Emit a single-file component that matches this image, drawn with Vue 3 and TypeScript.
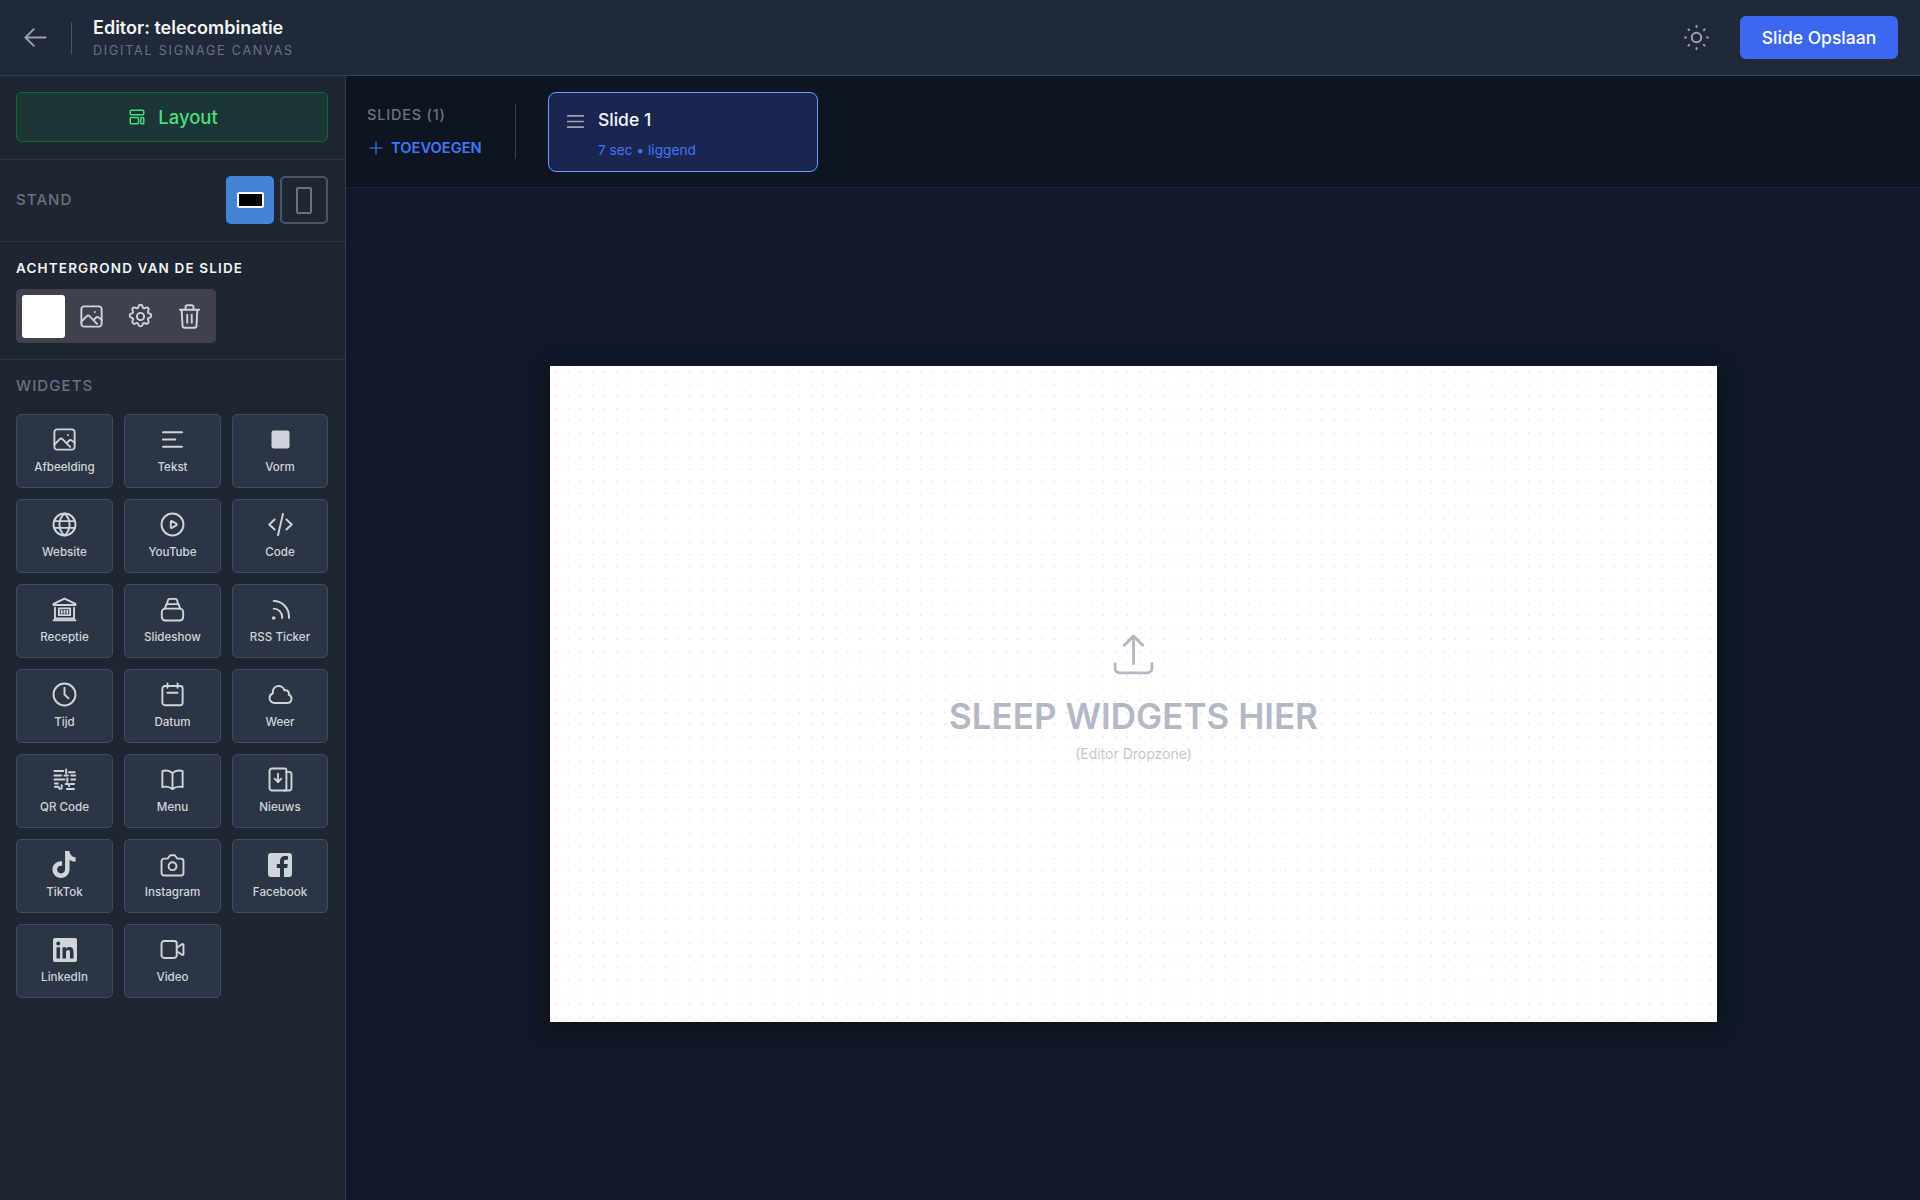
<script setup lang="ts">
interface Widget {
  label: string
  paths: string[]
  filled?: boolean
  brand?: boolean
}

const photo = [
  'M5.5 3h13A2.5 2.5 0 0 1 21 5.5v13a2.5 2.5 0 0 1-2.5 2.5h-13A2.5 2.5 0 0 1 3 18.5v-13A2.5 2.5 0 0 1 5.5 3Z',
  'M3 16.5l4.6-4.6a2 2 0 0 1 2.8 0l6.6 6.6',
  'M14.5 14.5l1.4-1.4a2 2 0 0 1 2.6-.1L21 15',
  'M15 8h.01',
]

const widgets: Widget[] = [
  { label: 'Afbeelding', paths: photo },
  { label: 'Tekst', paths: ['M3.5 5.5h17', 'M3.5 12h11', 'M3.5 18.5h17'] },
  { label: 'Vorm', paths: ['M6 4h12a2 2 0 0 1 2 2v12a2 2 0 0 1-2 2H6a2 2 0 0 1-2-2V6a2 2 0 0 1 2-2Z'], filled: true },
  {
    label: 'Website',
    paths: [
      'M21.75 12a9.75 9.75 0 1 1-19.5 0 9.75 9.75 0 0 1 19.5 0Z',
      'M12 2.25c-3 2.6-4.5 5.9-4.5 9.75s1.5 7.15 4.5 9.75c3-2.6 4.5-5.9 4.5-9.75S15 4.85 12 2.25Z',
      'M2.8 9h18.4',
      'M2.8 15h18.4',
    ],
  },
  {
    label: 'YouTube',
    paths: [
      'M21.75 12a9.75 9.75 0 1 1-19.5 0 9.75 9.75 0 0 1 19.5 0Z',
      'M15.6 11.5a.6.6 0 0 1 0 1l-4.2 2.6a.6.6 0 0 1-.9-.5V9.4a.6.6 0 0 1 .9-.5l4.2 2.6Z',
    ],
  },
  { label: 'Code', paths: ['M6.75 7.5 2 12l4.75 4.5', 'M17.25 7.5 22 12l-4.75 4.5', 'M14.25 2.5l-4.5 19'] },
  {
    label: 'Receptie',
    paths: [
      'M12 2.25 21.75 7v1H2.25V7L12 2.25Z',
      'M3.5 10.5v9.5h17v-9.5',
      'M2.25 21.5h19.5',
      'M7 11h10v6H7Z',
      'M9.5 13v2',
      'M12 13v2',
      'M14.5 13v2',
    ],
  },
  {
    label: 'Slideshow',
    paths: [
      'M5.5 11.25h13a3 3 0 0 1 3 3v4.5a3 3 0 0 1-3 3h-13a3 3 0 0 1-3-3v-4.5a3 3 0 0 1 3-3Z',
      'M5.25 11.25 6.6 7.25h10.8l1.35 4',
      'M7 7.25l1-3.6a1.5 1.5 0 0 1 1.4-1.1h5.2a1.5 1.5 0 0 1 1.4 1.1l1 3.6',
    ],
  },
  {
    label: 'RSS Ticker',
    paths: [
      'M6 4.5c7.45 0 13.5 6.05 13.5 13.5v1.5',
      'M6 11.25A7.5 7.5 0 0 1 13.5 18.75v.75',
      'M5.25 19.5a.75.75 0 1 0 1.5 0 .75.75 0 0 0-1.5 0Z',
    ],
  },
  {
    label: 'Tijd',
    paths: ['M21.75 12a9.75 9.75 0 1 1-19.5 0 9.75 9.75 0 0 1 19.5 0Z', 'M12 6v6l3.5 3.5'],
  },
  {
    label: 'Datum',
    paths: [
      'M5.25 4.5h13.5a2.25 2.25 0 0 1 2.25 2.25v12.5a2.25 2.25 0 0 1-2.25 2.25H5.25A2.25 2.25 0 0 1 3 19.25V6.75A2.25 2.25 0 0 1 5.25 4.5Z',
      'M7.5 2.25V6',
      'M16.5 2.25V6',
      'M7.5 10.5h9',
    ],
  },
  {
    label: 'Weer',
    paths: [
      'M2.25 15a4.5 4.5 0 0 0 4.5 4.5H18a3.75 3.75 0 0 0 1.33-7.26 3 3 0 0 0-3.83-3.84A5.25 5.25 0 0 0 5.3 10.9 4.5 4.5 0 0 0 2.25 15Z',
    ],
  },
  {
    label: 'QR Code',
    paths: [
      'M3 4.5h8',
      'M13.5 3v3.5',
      'M16 5.5h5',
      'M3 8.5h6',
      'M12 8.5h3',
      'M18 8.5h3.5',
      'M3 12h9',
      'M14.5 11v3',
      'M18 12h3.5',
      'M3.5 15.5h2.5',
      'M3.5 18.5h3l1.5 2',
      'M9.5 17v3',
      'M13 16h3v2',
      'M17.5 16h3',
      'M14 20.5h6.5',
    ],
  },
  {
    label: 'Menu',
    paths: [
      'M12 6.2A9 9 0 0 0 6 4a9 9 0 0 0-3 .5v14.3a9 9 0 0 1 3-.5c2.3 0 4.4.9 6 2.2',
      'M12 6.2A9 9 0 0 1 18 4a9 9 0 0 1 3 .5v14.3a9 9 0 0 0-3-.5c-2.3 0-4.4.9-6 2.2V6.2Z',
    ],
  },
  {
    label: 'Nieuws',
    paths: [
      'M4.5 2.25h11.25a1.5 1.5 0 0 1 1.5 1.5v16.5a1.5 1.5 0 0 1-1.5 1.5H4.5A2.25 2.25 0 0 1 2.25 19.5v-15A2.25 2.25 0 0 1 4.5 2.25Z',
      'M17.25 5.25h2.25a2.25 2.25 0 0 1 2.25 2.25v12a2.25 2.25 0 0 1-2.25 2.25h-4',
      'M9.75 6.75v7.5',
      'M6.75 11.25l3 3 3-3',
    ],
  },
  {
    label: 'TikTok',
    paths: [
      'M12.5 0h3.9c.2 3.1 2.4 5.4 5.4 5.6v3.9c-2 .1-3.8-.6-5.3-1.7v8.3c0 4.4-3.2 7.9-7.6 7.9-4.2 0-7.6-3.3-7.6-7.5 0-4.6 4-8 8.6-7.3v4.1c-2.2-.6-4.5.9-4.5 3.2 0 1.9 1.5 3.5 3.5 3.5s3.6-1.6 3.6-3.7V0Z',
    ],
    filled: true,
  },
  {
    label: 'Instagram',
    paths: [
      'M4.5 6.75h2.6a1.5 1.5 0 0 0 1.3-.7l.9-1.5a1.5 1.5 0 0 1 1.3-.8h2.8a1.5 1.5 0 0 1 1.3.8l.9 1.5a1.5 1.5 0 0 0 1.3.7h2.6a2.25 2.25 0 0 1 2.25 2.25v10.5a2.25 2.25 0 0 1-2.25 2.25H4.5a2.25 2.25 0 0 1-2.25-2.25V9a2.25 2.25 0 0 1 2.25-2.25Z',
      'M15.5 13.5a3.5 3.5 0 1 1-7 0 3.5 3.5 0 0 1 7 0Z',
    ],
  },
  {
    label: 'Facebook',
    paths: [
      'M3 0h18a3 3 0 0 1 3 3v18a3 3 0 0 1-3 3h-5v-9h3.2l.6-4H16V8.6c0-1.1.5-1.9 2-1.9h2V3.2c-.7-.1-1.7-.2-2.9-.2-3 0-5.1 1.8-5.1 5.1V11H8.8v4H12v9H3a3 3 0 0 1-3-3V3a3 3 0 0 1 3-3Z',
    ],
    filled: true,
    brand: true,
  },
  {
    label: 'LinkedIn',
    paths: [
      'M2 0h20a2 2 0 0 1 2 2v20a2 2 0 0 1-2 2H2a2 2 0 0 1-2-2V2a2 2 0 0 1 2-2Zm1.5 9.2V20.5H7V9.2H3.5ZM5.25 3.5a2 2 0 1 0 0 4 2 2 0 0 0 0-4ZM9.5 9.2V20.5H13v-5.6c0-1.5.3-2.9 2.1-2.9s1.9 1.7 1.9 3v5.5h3.5v-6.2c0-3-.7-5.4-4.2-5.4-1.7 0-2.8.9-3.3 1.8h-.05V9.2H9.5Z',
    ],
    filled: true,
    brand: true,
  },
  {
    label: 'Video',
    paths: [
      'M4.5 4.5h9a2.25 2.25 0 0 1 2.25 2.25v10.5a2.25 2.25 0 0 1-2.25 2.25h-9a2.25 2.25 0 0 1-2.25-2.25V6.75A2.25 2.25 0 0 1 4.5 4.5Z',
      'M15.75 10.5l4.7-3.1a.75.75 0 0 1 1.3.6v8a.75.75 0 0 1-1.3.6l-4.7-3.1',
    ],
  },
]
</script>

<template>
  <div class="editor">
    <header class="topbar">
      <div class="topbar-left">
        <button class="back" aria-label="Terug">
          <svg viewBox="0 0 24 24" class="back-icon">
            <path d="M10.5 19.5 3 12l7.5-7.5M3 12h18" />
          </svg>
        </button>
        <div class="topbar-sep"></div>
        <div>
          <h1 class="title">Editor: telecombinatie</h1>
          <p class="subtitle">DIGITAL SIGNAGE CANVAS</p>
        </div>
      </div>
      <div class="topbar-right">
        <svg viewBox="0 0 24 24" class="sun">
          <circle cx="12" cy="12" r="4.2" />
          <path d="M12 1.8v.9M12 21.3v.9M1.8 12h.9M21.3 12h.9M4.8 4.8l.6.6M18.6 18.6l.6.6M4.8 19.2l.6-.6M18.6 5.4l.6-.6" />
        </svg>
        <button class="save">Slide Opslaan</button>
      </div>
    </header>

    <div class="body">
      <aside class="sidebar">
        <div class="section layout-section">
          <button class="layout-btn">
            <svg viewBox="0 0 24 24" class="layout-icon">
              <rect x="3" y="3" width="18" height="6" rx="1.5" />
              <rect x="3" y="12.5" width="11" height="8.5" rx="1.5" />
              <rect x="17" y="12.5" width="4" height="8.5" rx="1.5" />
            </svg>
            Layout
          </button>
        </div>

        <div class="section stand-section">
          <span class="muted-label">STAND</span>
          <div class="stand-btns">
            <button class="stand active"><span class="landscape"></span></button>
            <button class="stand"><span class="portrait"></span></button>
          </div>
        </div>

        <div class="section bg-section">
          <h2 class="bg-title">ACHTERGROND VAN DE SLIDE</h2>
          <div class="bg-tools">
            <span class="swatch"></span>
            <svg viewBox="0 0 24 24" class="tool-icon">
              <path v-for="d in photo" :key="d" :d="d" />
            </svg>
            <svg viewBox="0 0 24 24" class="tool-icon">
              <path d="M10.3 2.8a1.8 1.8 0 0 1 3.4 0l.3.9a1.3 1.3 0 0 0 1.8.8l.9-.4a1.8 1.8 0 0 1 2.4 2.4l-.4.9a1.3 1.3 0 0 0 .8 1.8l.9.3a1.8 1.8 0 0 1 0 3.4l-.9.3a1.3 1.3 0 0 0-.8 1.8l.4.9a1.8 1.8 0 0 1-2.4 2.4l-.9-.4a1.3 1.3 0 0 0-1.8.8l-.3.9a1.8 1.8 0 0 1-3.4 0l-.3-.9a1.3 1.3 0 0 0-1.8-.8l-.9.4a1.8 1.8 0 0 1-2.4-2.4l.4-.9a1.3 1.3 0 0 0-.8-1.8l-.9-.3a1.8 1.8 0 0 1 0-3.4l.9-.3a1.3 1.3 0 0 0 .8-1.8l-.4-.9a1.8 1.8 0 0 1 2.4-2.4l.9.4a1.3 1.3 0 0 0 1.8-.8l.3-.9Z" />
              <circle cx="12" cy="12" r="3.2" />
            </svg>
            <svg viewBox="0 0 24 24" class="tool-icon">
              <path d="M3.5 6h17M8.5 6V3.5A1.5 1.5 0 0 1 10 2h4a1.5 1.5 0 0 1 1.5 1.5V6M5 6l.8 14a2 2 0 0 0 2 2h8.400a2 2 0 0 0 2-2L19 6M10 10.500v7M14 10.500v7" />
            </svg>
          </div>
        </div>

        <div class="widgets-section">
          <span class="muted-label">WIDGETS</span>
          <div class="widget-grid">
            <div v-for="w in widgets" :key="w.label" class="widget">
              <svg viewBox="0 0 24 24" class="widget-icon" :class="{ filled: w.filled, brand: w.brand }">
                <path v-for="d in w.paths" :key="d" :d="d" />
              </svg>
              <span class="widget-label">{{ w.label }}</span>
            </div>
          </div>
        </div>
      </aside>

      <main class="main">
        <div class="slides-bar">
          <div class="slides-head">
            <span class="slides-count">SLIDES (1)</span>
            <button class="add">
              <svg viewBox="0 0 24 24" class="add-icon"><path d="M12 4v16M4 12h16" /></svg>
              TOEVOEGEN
            </button>
          </div>
          <div class="slides-sep"></div>
          <div class="slide-card">
            <svg viewBox="0 0 24 24" class="drag-icon"><path d="M3 5.5h18M3 12h18M3 18.5h18" /></svg>
            <div>
              <div class="slide-name">Slide 1</div>
              <div class="slide-meta">7 sec • liggend</div>
            </div>
          </div>
        </div>

        <div class="stage">
          <div class="canvas">
            <svg viewBox="0 0 24 24" class="upload-icon">
              <path d="M3 16.5v2.25A2.25 2.25 0 0 0 5.25 21h13.5A2.25 2.25 0 0 0 21 18.75V16.500M7.500 7.500 12 3l4.500 4.500M12 3v13.500" />
            </svg>
            <div class="drop-title">SLEEP WIDGETS HIER</div>
            <div class="drop-sub">(Editor Dropzone)</div>
          </div>
        </div>
      </main>
    </div>
  </div>
</template>

<style>
html,
body {
  margin: 0;
  background: #111827;
}
</style>

<style scoped>
.editor {
  height: 100vh;
  display: flex;
  flex-direction: column;
  font-family: Inter, "Noto Sans", sans-serif;
  color: #e5e7eb;
  overflow: hidden;
}

button {
  font-family: inherit;
  cursor: pointer;
}

svg {
  fill: none;
  stroke: currentColor;
  stroke-linecap: round;
  stroke-linejoin: round;
  flex-shrink: 0;
}

.topbar {
  height: 75px;
  flex-shrink: 0;
  display: flex;
  align-items: center;
  justify-content: space-between;
  background: #202937;
  border-bottom: 1px solid #374151;
  padding: 0 22px;
}

.topbar-left,
.topbar-right {
  display: flex;
  align-items: center;
}

.back {
  background: none;
  border: 0;
  padding: 0;
  display: flex;
  color: #9ca3af;
}

.back-icon {
  width: 27px;
  height: 27px;
  stroke-width: 1.6;
}

.topbar-sep {
  width: 1px;
  height: 32px;
  background: #4b5563;
  margin: 0 21px 0 22px;
}

.title {
  margin: 0;
  font-size: 18px;
  line-height: 24px;
  font-weight: 600;
  color: #f3f4f6;
}

.subtitle {
  margin: 3px 0 0;
  font-size: 12.5px;
  line-height: 16px;
  letter-spacing: 1.8px;
  color: #6b7280;
}

.sun {
  width: 27px;
  height: 27px;
  color: #9ca3af;
  stroke-width: 1.8;
  margin-right: 30px;
}

.save {
  width: 158px;
  height: 43px;
  border: 0;
  border-radius: 6px;
  background: #3b68ee;
  color: #fff;
  font-size: 17.5px;
  font-weight: 500;
}

.body {
  flex: 1;
  display: flex;
  min-height: 0;
}

.sidebar {
  width: 346px;
  box-sizing: border-box;
  flex-shrink: 0;
  background: #1e2533;
  border-right: 1px solid #353d4b;
}

.section {
  border-bottom: 1px solid #2f3744;
  padding: 16px 17px 17px 16px;
}

.layout-btn {
  width: 100%;
  height: 50px;
  display: flex;
  align-items: center;
  justify-content: center;
  gap: 12px;
  padding: 0 0 0 2px;
  background: #1c3535;
  border: 1px solid #166534;
  border-radius: 5px;
  color: #4ade80;
  font-size: 18.5px;
  font-weight: 500;
}

.layout-icon {
  width: 18px;
  height: 18px;
  stroke-width: 2;
}

.stand-section {
  display: flex;
  align-items: center;
  justify-content: space-between;
}

.muted-label {
  display: block;
  font-size: 15px;
  line-height: 18px;
  font-weight: 500;
  letter-spacing: 1.1px;
  color: #6b7280;
}

.stand-btns {
  display: flex;
  gap: 6px;
}

.stand {
  width: 48px;
  height: 48px;
  box-sizing: border-box;
  display: flex;
  align-items: center;
  justify-content: center;
  padding: 0;
  background: transparent;
  border: 2px solid #4b5563;
  border-radius: 5px;
}

.stand.active {
  background: #4384d6;
  border: 0;
}

.landscape {
  width: 27px;
  height: 16px;
  box-sizing: border-box;
  background: #000;
  border: 2px solid #fff;
  border-radius: 2px;
}

.portrait {
  width: 16px;
  height: 27px;
  box-sizing: border-box;
  border: 2px solid #6b7280;
  border-radius: 2px;
}

.bg-section {
  padding: 17px 17px 16px 16px;
}

.bg-title {
  margin: 0 0 12px;
  font-size: 13.5px;
  line-height: 18px;
  font-weight: 600;
  letter-spacing: 1.15px;
  color: #f3f4f6;
}

.bg-tools {
  width: 200px;
  height: 54px;
  box-sizing: border-box;
  display: flex;
  align-items: center;
  gap: 22px;
  padding: 0 6px;
  background: #3e424d;
  border-radius: 5px;
  color: #d1d5db;
}

.swatch {
  width: 43px;
  height: 43px;
  background: #fff;
  border-radius: 3px;
  margin-right: -9px;
}

.tool-icon {
  width: 27px;
  height: 27px;
  stroke-width: 1.7;
}

.widgets-section {
  padding: 17px 17px 16px 16px;
}

.widget-grid {
  margin-top: 19px;
  display: grid;
  grid-template-columns: 97px 97px 96px;
  gap: 11px;
}

.widget {
  height: 74px;
  box-sizing: border-box;
  display: flex;
  flex-direction: column;
  align-items: center;
  padding-top: 11px;
  background: #2b3544;
  border: 1px solid #414b5a;
  border-radius: 5px;
}

.widget-icon {
  width: 27px;
  height: 27px;
  stroke-width: 1.7;
  color: #d1d5db;
}

.widget-icon.filled {
  fill: currentColor;
  stroke: none;
}

.widget-icon.brand {
  width: 24px;
  height: 24px;
  margin: 1.5px 0;
}

.widget-label {
  margin-top: 6px;
  font-size: 11.6px;
  line-height: 16px;
  font-weight: 500;
  color: #d1d5db;
}

.main {
  flex: 1;
  min-width: 0;
  display: flex;
  flex-direction: column;
}

.slides-bar {
  height: 112px;
  box-sizing: border-box;
  flex-shrink: 0;
  display: flex;
  align-items: flex-start;
  padding: 16px 0 0 21px;
  background: #0f1423;
  border-bottom: 1px solid #1c2331;
}

.slides-head {
  width: 148px;
  padding-top: 14px;
}

.slides-count {
  display: block;
  font-size: 14.5px;
  line-height: 18px;
  font-weight: 500;
  letter-spacing: 0.8px;
  color: #6b7280;
}

.add {
  display: flex;
  align-items: center;
  gap: 6px;
  margin-top: 15px;
  padding: 0;
  background: none;
  border: 0;
  color: #3f78f7;
  font-size: 14.7px;
  font-weight: 600;
}

.add-icon {
  width: 18px;
  height: 18px;
  stroke-width: 1.5;
}

.slides-sep {
  width: 1px;
  height: 55px;
  margin: 12px 32px 0 0;
  background: #374151;
}

.slide-card {
  width: 270px;
  height: 80px;
  box-sizing: border-box;
  display: flex;
  gap: 12px;
  padding: 15px 16px;
  background: #1a2550;
  border: 1px solid #60a5fa;
  border-radius: 8px;
}

.drag-icon {
  width: 21px;
  height: 21px;
  margin-top: 3px;
  color: #9ca3af;
  stroke-width: 1.9;
}

.slide-name {
  font-size: 17.5px;
  line-height: 24px;
  font-weight: 500;
  color: #f3f4f6;
}

.slide-meta {
  margin-top: 8px;
  font-size: 13.7px;
  line-height: 20px;
  color: #3f78f7;
}

.stage {
  flex: 1;
  min-height: 0;
  display: flex;
  align-items: center;
  justify-content: center;
  background: #111827;
  padding: 0 0 2px 1px;
}

.canvas {
  width: 1167px;
  height: 656px;
  box-sizing: border-box;
  padding-top: 6px;
  margin-top: 2px;
  display: flex;
  flex-direction: column;
  align-items: center;
  justify-content: center;
  background-color: #fff;
  background-image: radial-gradient(circle, #d9dbe0 0.7px, transparent 1px);
  background-size: 12.16px 12.16px;
  box-shadow: 0 4px 20px rgba(0, 0, 0, 0.4);
}

.upload-icon {
  width: 49px;
  height: 49px;
  color: #b4b8c4;
  stroke-width: 1.4;
}

.drop-title {
  margin-top: 15px;
  font-size: 35px;
  line-height: 44px;
  font-weight: 600;
  color: #b4b8c4;
}

.drop-sub {
  margin-top: 6px;
  font-size: 14px;
  line-height: 20px;
  color: #c4c7d0;
}
</style>
